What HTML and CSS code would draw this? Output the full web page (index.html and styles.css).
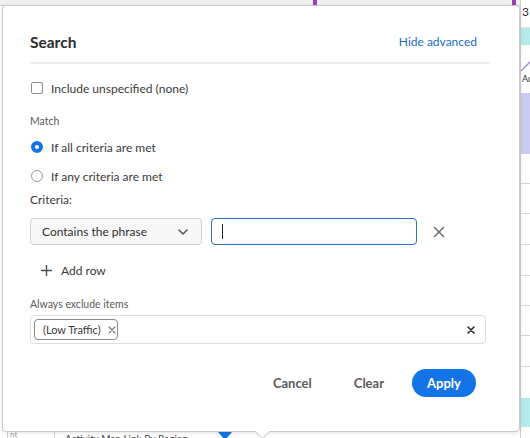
FILE: index.html
```html
<!DOCTYPE html>
<html>
<head>
<meta charset="utf-8">
<link rel="stylesheet" href="styles.css">
</head>
<body>
<div class="app">
  <div class="main">
    <div class="topstrip">
      <span class="mark mark-a"></span>
      <span class="mark mark-b"></span>
    </div>
    <div class="canvas"></div>
    <div class="bottomstrip">
      <span class="bcol bcol-a"><span class="vtext">nt</span></span>
      <span class="bcol bcol-b"></span>
      <span class="btext">Activity Map Link By Region</span>
      <span class="btri"></span>
    </div>
  </div>
  <div class="side">
    <div class="s-num">3</div>
    <div class="s-teal"></div>
    <div class="s-chart"><svg width="10" height="20" viewBox="0 0 10 20"><path d="M0 18 L10 8" stroke="#a78bd8" stroke-width="1.5" fill="none"/></svg><span>Au</span></div>
    <div class="s-lav"></div>
    <div class="s-row r30"></div>
    <div class="s-row r30"></div>
    <div class="s-row r31"></div>
    <div class="s-row r31"></div>
    <div class="s-row r30"></div>
    <div class="s-row r30"></div>
    <div class="s-row r31"></div>
    <div class="s-gap"></div>
    <div class="s-teal2"></div>
  </div>

  <div class="popover">
    <div class="pop-head">
      <h2 class="title">Search</h2>
      <a class="link">Hide advanced</a>
    </div>

    <label class="check-row">
      <span class="checkbox"></span>
      <span>Include unspecified (none)</span>
    </label>

    <div class="small-label match-label">Match</div>
    <label class="radio-row first">
      <span class="radio on"></span>
      <span>If all criteria are met</span>
    </label>
    <label class="radio-row">
      <span class="radio"></span>
      <span>If any criteria are met</span>
    </label>

    <div class="criteria-label">Criteria:</div>
    <div class="criteria-row">
      <div class="select">
        <span>Contains the phrase</span>
        <svg class="chev" width="10" height="6" viewBox="0 0 10 6"><path d="M1 1 L5 5 L9 1" stroke="#505050" stroke-width="1.5" fill="none" stroke-linecap="round" stroke-linejoin="round"/></svg>
      </div>
      <div class="input"><span class="caret"></span></div>
      <svg class="remove" width="12" height="12" viewBox="0 0 12 12"><path d="M1.5 1.5 L10.5 10.5 M10.5 1.5 L1.5 10.5" stroke="#6e6e6e" stroke-width="1.6" stroke-linecap="round"/></svg>
    </div>

    <div class="add-row">
      <svg width="11" height="11" viewBox="0 0 11 11"><path d="M5.5 0.5 V10.5 M0.5 5.5 H10.5" stroke="#505050" stroke-width="1.4" stroke-linecap="round"/></svg>
      <span>Add row</span>
    </div>

    <div class="small-label exclude-label">Always exclude items</div>
    <div class="tagfield">
      <span class="tag">(Low Traffic)<svg class="tag-x" width="8" height="8" viewBox="0 0 8 8"><path d="M1 1 L7 7 M7 1 L1 7" stroke="#707070" stroke-width="1.1" stroke-linecap="round"/></svg></span>
      <svg class="clear-all" width="8" height="8" viewBox="0 0 8 8"><path d="M1 1 L7 7 M7 1 L1 7" stroke="#2c2c2c" stroke-width="1.6" stroke-linecap="round"/></svg>
    </div>

    <div class="actions">
      <button class="btn quiet cancel">Cancel</button>
      <button class="btn quiet clear">Clear</button>
      <button class="btn primary">Apply</button>
    </div>
    <span class="arrow"></span>
  </div>
</div>
</body>
</html>
```

FILE: styles.css
```css
* { box-sizing: border-box; }
html, body { margin: 0; padding: 0; }
body {
  width: 530px;
  height: 438px;
  overflow: hidden;
  background: #ffffff;
  font-family: Lato, "Liberation Sans", sans-serif;
  color: #4b4b4b;
}
.app {
  position: relative;
  display: flex;
  width: 530px;
  height: 438px;
}
.main {
  flex: 1;
  display: flex;
  flex-direction: column;
}
.topstrip {
  position: relative;
  height: 6px;
  background: #f0f0f0;
  border-bottom: 1px solid #cfcfcf;
}
.mark {
  position: absolute;
  top: 0;
  width: 4px;
  height: 5px;
  background: #a23bb8;
}
.mark-a { left: 313px; }
.mark-b { left: 512px; }
.canvas { flex: 1; }
.bottomstrip {
  position: relative;
  height: 8px;
  display: flex;
  align-items: flex-start;
  overflow: hidden;
}
.bcol {
  height: 8px;
  border-right: 1px solid #d0d0d0;
}
.bcol-a { width: 8px; }
.bcol-b { width: 47px; position: relative; }
.vtext {
  font-size: 8px;
  line-height: 8px;
  color: #9a9a9a;
  position: absolute;
  left: 10px;
  top: 0;
}
.btext {
  margin-left: 10px;
  margin-top: 3px;
  font-size: 10px;
  color: #444;
  line-height: 10px;
  white-space: nowrap;
}
.btri {
  position: absolute;
  left: 218px;
  top: 2px;
  width: 0;
  height: 0;
  border-left: 7px solid transparent;
  border-right: 7px solid transparent;
  border-top: 8px solid #1473e6;
}
.side {
  width: 10px;
  border-left: 1px solid #cfcfcf;
  display: flex;
  flex-direction: column;
  overflow: hidden;
}
.s-num {
  height: 28px;
  font-size: 12px;
  line-height: 12px;
  padding: 6px 0 0 1px;
  color: #333;
  border-bottom: 1px solid #e4e4e4;
}
.s-teal { height: 17px; background: #b3ebeb; }
.s-chart {
  position: relative;
  height: 48px;
  font-size: 9px;
  color: #333;
}
.s-chart svg { position: absolute; left: 0; top: 8px; }
.s-chart span { position: absolute; left: 1px; top: 28px; }
.s-lav { height: 61px; background: #cbcbf2; }
.s-row { border-bottom: 1px solid #d4d4d4; }
.r30 { height: 30px; }
.r31 { height: 31px; }
.s-gap { height: 31px; }
.s-teal2 { height: 29px; background: #b3ebeb; }

/* Popover */
.popover {
  position: absolute;
  left: 2px;
  top: 5px;
  width: 518px;
  height: 427px;
  background: #ffffff;
  border: 1px solid #cacaca;
  border-radius: 4px;
  box-shadow: 0 1px 4px rgba(0,0,0,0.12);
  padding: 0 29px 0 27px;
  display: flex;
  flex-direction: column;
  font-size: 12px;
}
.pop-head {
  display: flex;
  justify-content: space-between;
  align-items: center;
  padding: 26px 13px 10px 0;
  border-bottom: 2px solid #ececec;
}
.title {
  margin: 0;
  font-size: 15.5px;
  line-height: 20px;
  font-weight: 700;
  color: #2c2c2c;
}
.link {
  font-size: 12px;
  color: #1b6ac9;
  line-height: 20px;
}
.check-row, .radio-row {
  display: flex;
  align-items: center;
  gap: 8px;
  height: 20px;
  padding-left: 1px;
  color: #3a3a3a;
}
.check-row { margin-top: 14px; }
.checkbox {
  width: 12px;
  height: 12px;
  border: 1.5px solid #8c8c8c;
  border-radius: 2px;
}
.small-label {
  font-size: 10.5px;
  line-height: 14px;
  color: #5a5a5a;
}
.match-label { margin-top: 16px; }
.radio-row { margin-top: 9px; }
.radio {
  width: 12px;
  height: 12px;
  border-radius: 50%;
  border: 1.5px solid #9a9a9a;
}
.radio.on { border: 4px solid #1473e6; }
.criteria-label {
  margin-top: 5px;
  line-height: 18px;
  color: #3a3a3a;
}
.criteria-row {
  margin-top: 9px;
  display: flex;
  align-items: center;
}
.select {
  width: 172px;
  height: 27px;
  background: #f7f7f7;
  border: 1px solid #d3d3d3;
  border-radius: 4px;
  display: flex;
  align-items: center;
  justify-content: space-between;
  padding: 0 13px 0 11px;
  color: #2f2f2f;
}
.input {
  margin-left: 9px;
  width: 206px;
  height: 27px;
  border: 1.5px solid #2d6fc2;
  border-radius: 4px;
  display: flex;
  align-items: center;
  padding-left: 10px;
}
.caret {
  width: 1px;
  height: 15px;
  background: #222;
}
.remove { margin-left: 16px; }
.add-row {
  margin-top: 15px;
  height: 20px;
  display: flex;
  align-items: center;
  gap: 9px;
  padding-left: 11px;
  color: #3a3a3a;
}
.exclude-label { margin-top: 17px; }
.tagfield {
  margin-top: 4px;
  width: 456px;
  height: 29px;
  border: 1px solid #dedede;
  border-radius: 4px;
  display: flex;
  align-items: center;
  justify-content: space-between;
  padding: 0 10px 0 3px;
}
.tag {
  height: 21px;
  width: 84px;
  border: 1px solid #8a8a8a;
  border-radius: 4px;
  display: flex;
  align-items: center;
  gap: 7px;
  padding-left: 8px;
  font-size: 11px;
  white-space: nowrap;
  color: #3a3a3a;
}
.actions {
  margin-top: 25px;
  display: flex;
  justify-content: flex-end;
  align-items: center;
  padding-right: 14px;
}
.btn {
  font-family: Lato, "Liberation Sans", sans-serif;
  font-size: 13px;
  font-weight: 700;
  border: none;
  background: none;
  padding: 0;
  height: 28px;
  cursor: pointer;
}
.quiet { color: #5a5a5a; }
.clear { margin-left: 42px; }
.primary {
  margin-left: 28px;
  background: #1473e6;
  color: #ffffff;
  border-radius: 14px;
  width: 64px;
}
.arrow {
  position: absolute;
  left: 254px;
  bottom: -6px;
  width: 11px;
  height: 11px;
  background: #ffffff;
  border-right: 1px solid #cacaca;
  border-bottom: 1px solid #cacaca;
  transform: rotate(45deg);
}
```
